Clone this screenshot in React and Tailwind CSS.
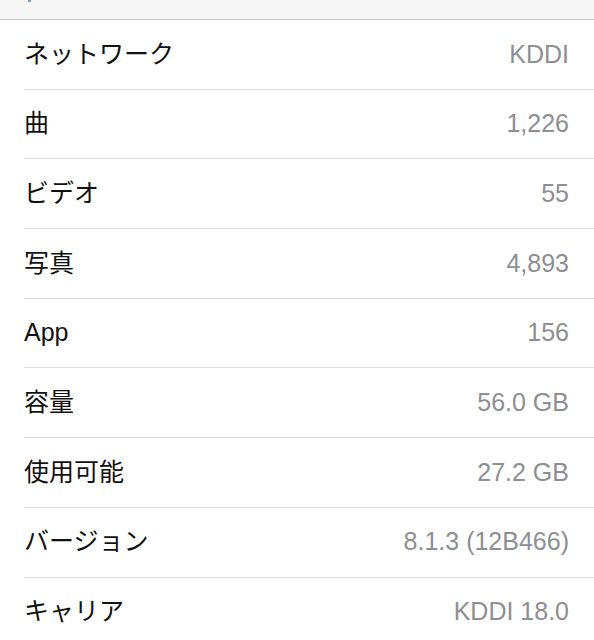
const rows = [
  ["ネットワーク", "KDDI"],
  ["曲", "1,226"],
  ["ビデオ", "55"],
  ["写真", "4,893"],
  ["App", "156"],
  ["容量", "56.0 GB"],
  ["使用可能", "27.2 GB"],
  ["バージョン", "8.1.3 (12B466)"],
  ["キャリア", "KDDI 18.0"],
];

export default function App() {
  return (
    <div className="w-[594px] h-[640px] overflow-hidden bg-white font-['Liberation_Sans','Noto_Sans_CJK_JP',sans-serif]">
      <div className="relative h-[20px] bg-[#f7f7f7] border-b border-[#c4c4cc]">
        <div className="absolute left-[28px] top-0 w-[3px] h-[2px] bg-[#7d9fd8]" />
      </div>
      <div className="pl-[24px]">
        {rows.map(([label, value]) => (
          <div
            key={label}
            className="h-[69.7px] flex items-center justify-between pr-[25px] border-b border-[#dcdcdc] text-[25px]"
          >
            <span className="text-[#111]">{label}</span>
            <span className="text-[#8e8e93]">{value}</span>
          </div>
        ))}
      </div>
    </div>
  );
}
